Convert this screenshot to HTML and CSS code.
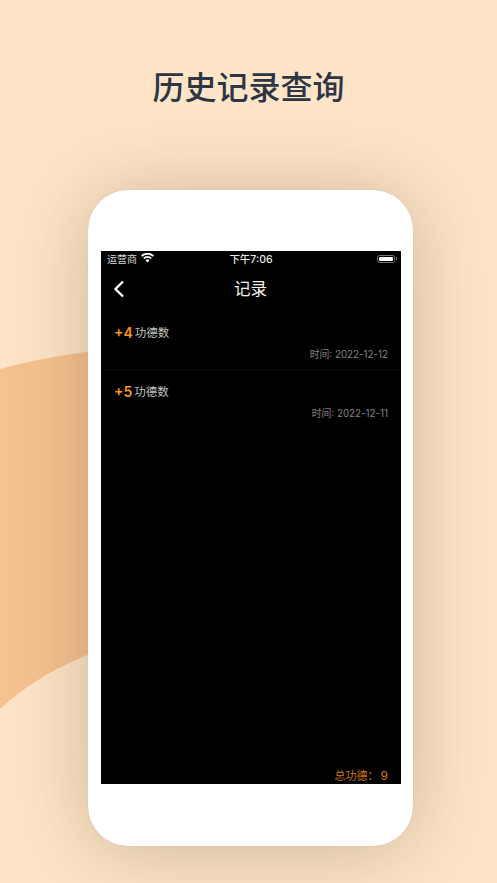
FILE: index.html
```html
<!DOCTYPE html>
<html lang="zh">
<head>
<meta charset="utf-8">
<title>历史记录查询</title>
<link rel="stylesheet" href="styles.css">
</head>
<body>
<svg class="wave" viewBox="0 0 497 883" width="497" height="883" aria-hidden="true">
  <path d="M0 369C30 361 60 355 100 350V650C60 665 30 682 0 709Z" fill="#f6c290"/>
</svg>
<main class="page">
  <h1 class="headline">历史记录查询</h1>
  <section class="phone">
    <div class="screen">
      <div class="status">
        <div class="status-left">
          <span>运营商</span>
          <svg class="wifi" viewBox="0 0 14 10" width="13" height="10"><path d="M7 9.800 4.800 7.400a3.200 3.200 0 0 1 4.400 0ZM3.700 6.200 2.300 4.700a6.800 6.800 0 0 1 9.400 0l-1.400 1.500a4.900 4.900 0 0 0-6.600 0ZM1.300 3.700 0 2.300a10 10 0 0 1 14 0l-1.300 1.400a8.200 8.200 0 0 0-11.400 0Z" fill="#fff"/></svg>
        </div>
        <div class="status-time">下午7:06</div>
        <div class="status-right">
          <div class="battery"><div class="battery-fill"></div></div>
          <div class="battery-cap"></div>
        </div>
      </div>
      <div class="nav">
        <svg class="back" viewBox="0 0 12 18" width="12" height="18"><path d="M10 1.500 2.500 9 10 16.500" fill="none" stroke="#fff" stroke-width="2.300"/></svg>
        <div class="nav-title">记录</div>
      </div>
      <div class="list">
        <article class="row">
          <div class="row-main"><span class="points">+4</span><span class="label">功德数</span></div>
          <div class="row-date">时间: 2022-12-12</div>
        </article>
        <article class="row">
          <div class="row-main"><span class="points">+5</span><span class="label">功德数</span></div>
          <div class="row-date">时间: 2022-12-11</div>
        </article>
      </div>
      <div class="total"><span>总功德：</span><span class="total-num">9</span></div>
    </div>
  </section>
</main>
</body>
</html>
```
FILE: styles.css
```css
* { box-sizing: border-box; }
html, body { margin: 0; padding: 0; }
body {
  width: 497px;
  height: 883px;
  overflow: hidden;
  position: relative;
  background: #fee5c8;
  font-family: "Inter", "Liberation Sans", "Noto Sans CJK SC", sans-serif;
}
.wave { position: absolute; left: 0; top: 0; }
.page {
  position: relative;
  display: flex;
  flex-direction: column;
  align-items: center;
  height: 883px;
}
.headline {
  margin: 60px 0 0;
  height: 50px;
  font: 500 32px/50px "Noto Sans CJK SC", sans-serif;
  color: #2d3644;
}
.phone {
  margin: 80px 0 0 4px;
  width: 325px;
  height: 656px;
  padding: 61px 12px 62px 13px;
  background: #fff;
  border-radius: 40px;
  box-shadow: 0 0 1px rgba(120, 100, 80, .3), 0 4px 80px rgba(90, 70, 40, .3);
}
.screen {
  height: 533px;
  background: #000;
  display: flex;
  flex-direction: column;
  font-family: "Inter", "Noto Sans CJK SC", sans-serif;
}
.status {
  height: 15px;
  padding: 0 4px 0 6px;
  display: grid;
  grid-template-columns: 1fr auto 1fr;
  align-items: center;
  color: #dcdcdc;
  font-size: 10px;
}
.status-left { display: flex; align-items: center; gap: 4px; }
.wifi { display: block; margin-top: -1px; }
.status-time { font-size: 10.500px; font-weight: 500; color: #e8e8e8; margin-right: 2px; }
.status-right { display: flex; justify-content: flex-end; align-items: center; }
.battery {
  width: 18px;
  height: 8px;
  padding: 1px;
  border: 1px solid #777;
  border-radius: 2.500px;
}
.battery-fill { height: 100%; background: #fff; border-radius: 1px; }
.battery-cap { width: 1px; height: 3px; background: #777; margin-left: 1px; }
.nav {
  height: 45px;
  position: relative;
  display: flex;
  align-items: center;
  justify-content: center;
  padding-bottom: 2px;
}
.back { position: absolute; left: 12px; top: 14px; }
.nav-title { font-size: 16.500px; color: #f2f2f2; margin-right: 1px; }
.list { flex: 1; }
.row {
  height: 59px;
  padding: 11px 13px 0;
  border-bottom: 1px solid #0a0a0a;
}
.row:last-child { border-bottom: 0; }
.row-main { display: flex; align-items: center; height: 20px; }
.points {
  color: #fb9412;
  font-size: 14px;
  font-weight: 600;
  margin-right: 2px;
}
.label { color: #c4c4c4; font-size: 11.500px; }
.row-date {
  margin-top: 5px;
  text-align: right;
  color: #828282;
  font-size: 9.800px;
  line-height: 16px;
}
.total {
  height: 16px;
  padding: 0 13px 2px 0;
  display: flex;
  justify-content: flex-end;
  align-items: center;
  color: #d27a0c;
  font-size: 11px;
}
.total-num { font-size: 12px; margin-left: 2px; }
```
